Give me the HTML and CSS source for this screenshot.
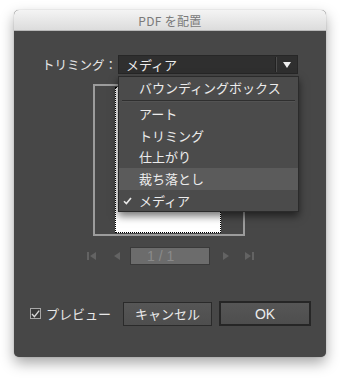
FILE: index.html
```html
<!DOCTYPE html>
<html lang="ja">
<head>
<meta charset="utf-8">
<link rel="stylesheet" href="styles.css">
</head>
<body>
<div class="window">
  <div class="titlebar">PDF を配置</div>
  <div class="content">
    <div class="trim-row">
      <span class="label">トリミング：</span>
      <div class="select">
        <span class="select-value">メディア</span>
        <span class="select-sep"></span>
        <svg class="select-arrow" width="8" height="6" viewBox="0 0 8 6"><path d="M0 0H8L4 6Z" fill="#f0f0f0"/></svg>
        <div class="menu">
          <div class="item">バウンディングボックス</div>
          <div class="menu-sep"></div>
          <div class="item">アート</div>
          <div class="item">トリミング</div>
          <div class="item">仕上がり</div>
          <div class="item hover">裁ち落とし</div>
          <div class="item checked"><svg class="check" width="9" height="8" viewBox="0 0 9 8"><path d="M1 4.2L3.4 6.6L8 1" fill="none" stroke="#e8e8e8" stroke-width="1.6"/></svg>メディア</div>
        </div>
      </div>
    </div>
    <div class="frame">
      <div class="page"></div>
    </div>
    <div class="nav">
      <svg class="nav-icon first" width="10" height="10" viewBox="0 0 10 10"><rect x="0" y="1" width="2" height="8" fill="#636363"/><path d="M9 1V9L3 5Z" fill="#636363"/></svg>
      <svg class="nav-icon prev" width="7" height="10" viewBox="0 0 7 10"><path d="M6 1V9L0 5Z" fill="#636363"/></svg>
      <div class="page-field">1 / 1</div>
      <svg class="nav-icon next" width="7" height="10" viewBox="0 0 7 10"><path d="M1 1V9L7 5Z" fill="#636363"/></svg>
      <svg class="nav-icon last" width="10" height="10" viewBox="0 0 10 10"><path d="M1 1V9L7 5Z" fill="#636363"/><rect x="8" y="1" width="2" height="8" fill="#636363"/></svg>
    </div>
    <div class="bottom">
      <label class="preview">
        <span class="checkbox"><svg width="9" height="8" viewBox="0 0 9 8"><path d="M1 4L3.4 6.6L8.2 0.6" fill="none" stroke="#d8d8d8" stroke-width="1.4"/></svg></span>
        <span class="preview-text">プレビュー</span>
      </label>
      <button class="btn cancel">キャンセル</button>
      <button class="btn ok">OK</button>
    </div>
  </div>
</div>
</body>
</html>
```
FILE: styles.css
```css
* { box-sizing: border-box; }
html, body { margin: 0; padding: 0; background: #ffffff; }
body {
  font-family: "Noto Sans CJK JP", "Noto Sans", sans-serif;
  width: 340px;
  height: 378px;
  padding: 10px 14px 0 14px;
}
.window {
  width: 312px;
  height: 347px;
  border-radius: 5px;
  background: #474747;
  box-shadow: 0 6px 14px rgba(0,0,0,0.35), 0 0 1px rgba(0,0,0,0.4);
  display: flex;
  flex-direction: column;
}
.titlebar {
  height: 21px;
  border-radius: 5px 5px 0 0;
  background: linear-gradient(#f4f4f4, #dcdcdc);
  border-bottom: 1px solid #b8b8b8;
  color: #7a7a7a;
  font-size: 12px;
  line-height: 21px;
  text-align: center;
  letter-spacing: 0.3px;
}
.content {
  flex: 1;
  display: flex;
  flex-direction: column;
  padding: 24px 0 0 0;
}
.trim-row {
  display: flex;
  align-items: center;
  height: 19px;
  padding-left: 28px;
}
.label {
  color: #e6e6e6;
  font-size: 12.5px;
  width: 76px;
  line-height: 19px;
}
.select {
  position: relative;
  width: 180px;
  height: 19px;
  background: #2f2f2f;
  border: 1px solid #272727;
  display: flex;
  align-items: center;
}
.select-value {
  color: #ececec;
  font-size: 13px;
  padding-left: 7px;
  flex: 1;
  line-height: 17px;
}
.select-sep {
  width: 2px;
  height: 15px;
  border-left: 1px solid #222;
  border-right: 1px solid #4c4c4c;
  margin-right: 6px;
}
.select-arrow { margin-right: 6px; }
.menu {
  position: absolute;
  left: -1px;
  top: 20px;
  width: 181px;
  background: #4b4b4b;
  border: 1px solid #2b2b2b;
  box-shadow: 0 4px 8px rgba(0,0,0,0.55);
  z-index: 5;
}
.item {
  height: 21.7px;
  line-height: 21.7px;
  color: #ececec;
  font-size: 13px;
  padding-left: 20px;
  position: relative;
}
.item:first-child { height: 22px; line-height: 21px; }
.item.hover { background: #5b5b5b; }
.check {
  position: absolute;
  left: 4px;
  top: 7px;
}
.menu-sep {
  height: 2px;
  border-top: 1px solid #2f2f2f;
  border-bottom: 1px solid #535353;
  margin: 1px 3px 1px 3px;
}
.frame {
  align-self: center;
  margin-top: 10px;
  margin-left: -2px;
  width: 152px;
  height: 152px;
  border: 2px solid #9c9c9c;
  display: flex;
  align-items: center;
  justify-content: center;
}
.page {
  width: 106px;
  height: 146px;
  margin-left: -2px;
  background: #ffffff;
  border: 1px dotted #000;
}
.nav {
  display: flex;
  align-items: center;
  margin-top: 11px;
  height: 18px;
  padding-left: 73px;
}
.nav-icon { display: block; }
.first { margin-right: 17px; }
.prev { margin-right: 9px; }
.page-field {
  width: 80px;
  height: 18px;
  background: #6c6c6c;
  border: 1px solid #3a3a3a;
  color: #8a8a8a;
  font-family: "Liberation Sans", "Noto Sans", sans-serif;
  font-size: 14px;
  line-height: 16px;
  padding-left: 16px;
  margin-right: 12px;
}
.next { margin-right: 15px; }
.bottom {
  display: flex;
  align-items: center;
  margin-top: 36px;
  padding-left: 16px;
}
.preview {
  display: flex;
  align-items: center;
  width: 93px;
}
.checkbox {
  width: 11px;
  height: 11px;
  border: 1px solid #a8a8a8;
  background: #3a3a3a;
  display: flex;
  align-items: center;
  justify-content: center;
  margin-right: 5px;
}
.checkbox svg { display: block; }
.preview-text {
  color: #e8e8e8;
  font-size: 13px;
}
.btn {
  font-family: "Noto Sans CJK JP", "Noto Sans", sans-serif;
  color: #ececec;
  font-size: 13px;
  background: linear-gradient(#565656, #4e4e4e);
  padding: 0;
}
.cancel {
  width: 89px;
  height: 24px;
  border: 1px solid #2a2a2a;
  margin-right: 7px;
}
.ok {
  width: 92px;
  height: 25px;
  border: 2px solid #262626;
  font-family: "Liberation Sans", "Noto Sans", sans-serif;
  font-size: 14px;
}
```
